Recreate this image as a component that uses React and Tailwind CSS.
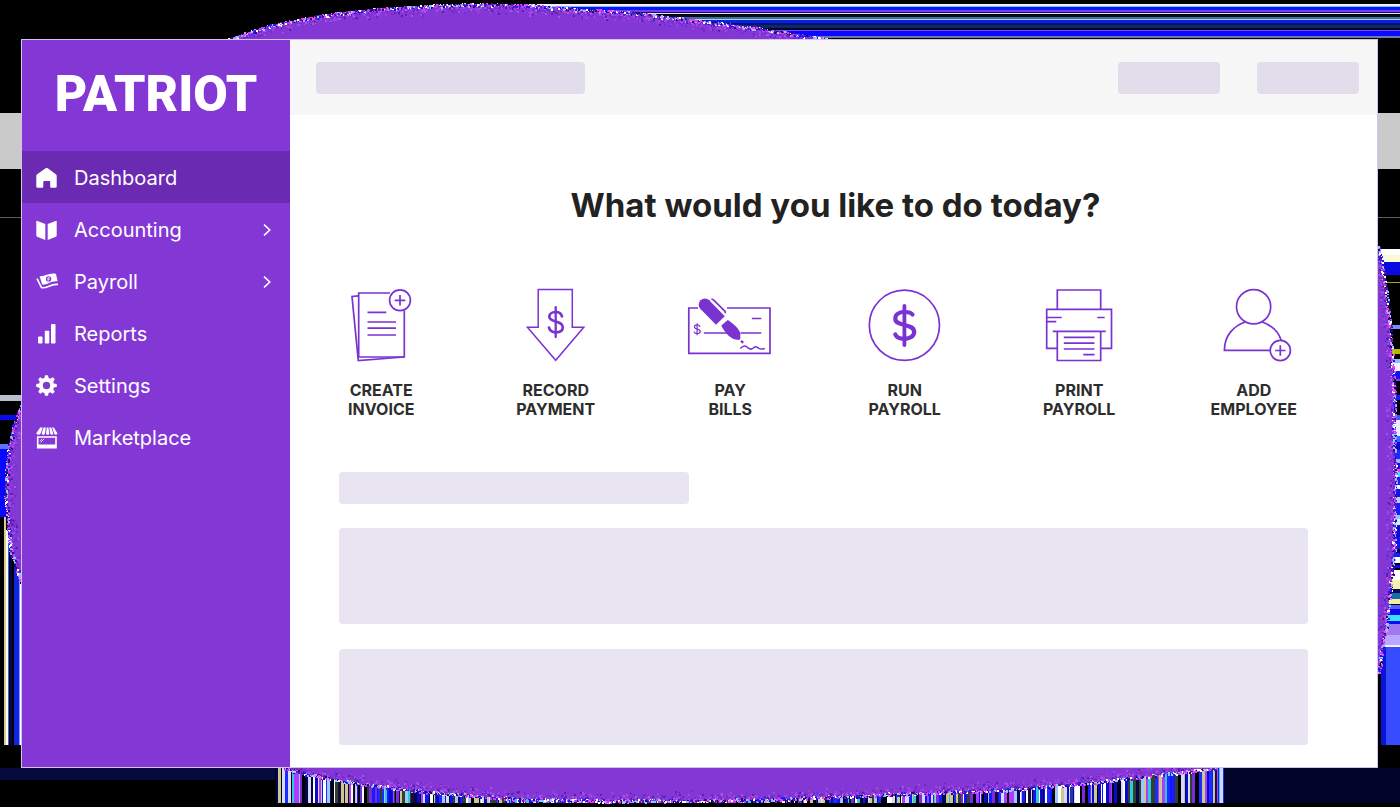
import React from 'react'

// seeded so the speckle looks the same on every render
function makeRandom(seed) {
  let s = seed
  return () => {
    s = (s * 16807) % 2147483647
    return s / 2147483647
  }
}

const TOP_EDGE = [[228, 39], [248, 32], [271, 25], [322, 15], [373, 9], [439, 5], [480, 4], [530, 5], [577, 9], [630, 12], [679, 18], [751, 27], [790, 33], [830, 39]]
const BOTTOM_EDGE = [[284, 768], [310, 775], [362, 784], [429, 792], [515, 799], [613, 801], [760, 800], [870, 795], [1004, 790], [1096, 782], [1157, 775], [1216, 768]]
const LEFT_EDGE = [[21, 405], [13, 425], [9, 445], [6, 470], [5, 500], [8, 525], [10, 550], [15, 565], [21, 584]]
const RIGHT_EDGE = [[1378, 246], [1383, 270], [1388, 310], [1391, 340], [1394, 390], [1394, 430], [1395, 480], [1394, 550], [1390, 590], [1387, 620], [1381, 655], [1378, 675]]

const SPECKLES = ['#ffffff', '#ff3bf0', '#1a1aff', '#7fd4ff', '#5b1fa8', '#c23bff', '#2b0a6b', '#b79bff']
const SOFT_SPECKLES = ['#5b1fa8', '#9c48e8', '#7428c8', '#a040d8', '#6a30e8', '#b050e0']

const TOP_STRIPES = [
  [4, 2, '#f4ecff'], [6, 1, '#6fc4ff'], [7, 3, '#0a14f5'], [10, 2, '#7a3bf0'], [12, 1, '#10106a'], [13, 1, '#e8e4ff'],
  [15, 2, '#061012'], [17, 2, '#3f6f96'], [19, 1, '#a8d8ff'], [20, 3, '#0a22e0'], [23, 2, '#04107a'], [25, 3, '#0b2a60'],
  [28, 2, '#04042a'], [30, 1, '#7a48e8'], [31, 5, '#0a0aff'], [36, 2, '#7076a8'],
]

const RIGHT_STRIPES = [
  [249, 6, '#ffffff'], [255, 7, '#fbf8d8'], [262, 13, '#0a0ae0'], [282, 1, '#a8a820'], [325, 4, '#7a8cff'],
  [349, 5, '#b8b800'], [359, 4, '#9cb4ff'], [363, 8, '#f4f4ff'], [371, 8, '#1414f0'], [379, 2, '#8a3bd0'],
  [395, 5, '#1a1aff'], [415, 5, '#3a5cff'], [420, 16, '#e8ecff'], [436, 6, '#2a6cff'], [442, 8, '#0a0ac8'],
  [450, 9, '#1a2cff'], [459, 4, '#9cb4ff'], [463, 6, '#1414e0'], [469, 3, '#ff3bf0'], [472, 5, '#3be8ff'],
  [477, 8, '#1a1aff'], [485, 4, '#f4f4ff'], [489, 8, '#1414e0'], [497, 6, '#b8ccff'], [503, 12, '#1a1aff'],
  [515, 4, '#7ad4ff'], [519, 6, '#dce4ff'], [525, 12, '#0a0ad0'], [537, 12, '#1414f0'], [549, 4, '#05053a'],
  [553, 4, '#1a1aff'], [557, 6, '#ffffff'], [565, 3, '#0a0ae0'], [570, 10, '#ffffff'], [580, 9, '#f4f0a8'],
  [589, 4, '#0a0a60'], [593, 6, '#1a6ca8'], [599, 5, '#f0f0a0'], [605, 4, '#5a5cff'], [609, 6, '#0a0af0'],
  [615, 6, '#3be0ff'], [621, 3, '#0a0af0'], [624, 11, '#a078f0'], [635, 10, '#b8a8ff'], [645, 2, '#f4ecff'],
]

const STRIPE_COLORS = ['#0a14ff', '#ffffff', '#000000', '#0a0ac8', '#7a2be0', '#9cc8ff', '#000018', '#1a2cff', '#b03bff', '#05054a', '#d8d8ff', '#33412a', '#1a1aff', '#c8c890', '#30c8e0', '#1a0a40']

function speckle(edge, seed, horizontal, inward) {
  const rand = makeRandom(seed)
  const dots = []
  for (let i = 0; i < edge.length - 1; i++) {
    const [x1, y1] = edge[i]
    const [x2, y2] = edge[i + 1]
    const count = Math.ceil(Math.hypot(x2 - x1, y2 - y1) * 3)
    for (let n = 0; n < count; n++) {
      const t = rand()
      const reach = rand() * rand() * 11 - 1
      const depth = reach * inward
      const x = Math.round(x1 + (x2 - x1) * t + (horizontal ? 0 : depth))
      const y = Math.round(y1 + (y2 - y1) * t + (horizontal ? depth : 0))
      // bright near the rim, close to the fill colour further in
      const palette = reach > 2 ? SOFT_SPECKLES : SPECKLES
      const color = palette[Math.floor(rand() * palette.length)]
      dots.push({ x, y, color, size: rand() > 0.4 ? 2 : 1 })
    }
  }
  return dots
}

function barcode() {
  const rand = makeRandom(771)
  const bars = []
  let x = 275
  while (x < 1224) {
    const w = 1 + Math.floor(rand() * 3)
    bars.push({ x, w, color: STRIPE_COLORS[Math.floor(rand() * STRIPE_COLORS.length)] })
    x += w
  }
  return bars
}

const DOTS = [
  ...speckle(TOP_EDGE, 11, true, 1),
  ...speckle(BOTTOM_EDGE, 23, true, -1),
  ...speckle(LEFT_EDGE, 37, false, 1),
  ...speckle(RIGHT_EDGE, 53, false, -1),
]
const BARS = barcode()

const points = (edge) => edge.map((p) => p.join(',')).join(' ')

function Backdrop() {
  return (
    <svg
      className="absolute inset-0 w-full h-full"
      viewBox="0 0 1400 807"
      preserveAspectRatio="none"
      shapeRendering="crispEdges"
      aria-hidden="true"
    >
      <rect width="1400" height="807" fill="#000" />
      <rect y="113" width="1400" height="56" fill="#cacaca" />
      <rect y="217" width="1400" height="1" fill="#5c5c5c" />
      {TOP_STRIPES.map(([y, h, color]) => (
        <rect key={y} x="530" y={y} width="870" height={h} fill={color} />
      ))}
      {RIGHT_STRIPES.map(([y, h, color]) => (
        <rect key={y} x="1379" y={y} width="21" height={h} fill={color} />
      ))}
      <rect x="1381" y="647" width="5" height="98" fill="#0a14d8" />
      <rect x="1386" y="647" width="14" height="98" fill="#384cff" />

      <rect y="395" width="22" height="6" fill="#b8c0cc" />
      <rect y="415" width="22" height="5" fill="#0a0ae8" />
      <rect y="444" width="10" height="5" fill="#5c74f0" />
      <rect y="449" width="8" height="68" fill="#0808ff" />
      <rect x="4" y="517" width="2" height="228" fill="#d8cc88" />
      <rect x="6" y="530" width="2" height="215" fill="#ffffff" />
      <rect x="8" y="530" width="1" height="215" fill="#3a5cff" />
      <rect x="10" y="545" width="2" height="200" fill="#06063a" />
      <rect x="14" y="550" width="5" height="195" fill="#1224e0" />
      <rect x="19" y="570" width="1" height="175" fill="#7a9cff" />
      <rect x="20" y="584" width="2" height="161" fill="#ffffff" />

      <rect y="768" width="275" height="12" fill="#060a3e" />
      <rect x="1224" y="768" width="176" height="35" fill="#02042a" />
      {BARS.map((bar) => (
        <rect key={bar.x} x={bar.x} y="768" width={bar.w} height="35" fill={bar.color} />
      ))}

      <polygon points={points(TOP_EDGE)} fill="#8338d6" />
      <polygon points={points(BOTTOM_EDGE)} fill="#8338d6" />
      <polygon points={points(LEFT_EDGE)} fill="#8338d6" />
      <polygon points={points(RIGHT_EDGE)} fill="#8338d6" />
      {DOTS.map((dot, i) => (
        <rect key={i} x={dot.x} y={dot.y} width={dot.size} height={dot.size} fill={dot.color} />
      ))}
    </svg>
  )
}

function NavIcon({ children }) {
  return (
    <svg className="w-[22px] h-[22px] shrink-0" viewBox="0 0 22 22" fill="currentColor" aria-hidden="true">
      {children}
    </svg>
  )
}

function HomeIcon() {
  return (
    <NavIcon>
      <path d="M9.600 1.300q1.100-.7 2.200 0l8 6q.9.700.9 1.800v10.400q0 1.200-1.200 1.200h-4.300q-1 0-1-1V15q0-1-1-1H8.300q-1 0-1 1v4.700q0 1-1 1H1.500q-1.200 0-1.200-1.200V9.100Q.3 8 1.200 7.300z" />
    </NavIcon>
  )
}

function BookIcon() {
  return (
    <NavIcon>
      <path d="M.3 2.600Q.3 1.500 1.400 1.900L9.300 4.900V21L1.100 17.700Q.3 17.300.3 16.500zM20.700 2.600Q20.700 1.500 19.600 1.900L11.700 4.900V21L19.900 17.700Q20.700 17.300 20.700 16.500z" />
    </NavIcon>
  )
}

function CashIcon() {
  return (
    <NavIcon>
      <path
        fillRule="evenodd"
        d="M3.600 5.300C9 5.800 13 1.500 20 2.900L21.600 10.300C15 9.600 12 13.700 6.300 13.700zM12.600 5.300A2.700 2.700 0 1 0 12.600 10.700A2.700 2.700 0 1 0 12.600 5.300z"
      />
      <path d="M13.700 7q-2-.9-2 .3t1.100.8q1.100.7-.5 1.100l-1-.3" fill="none" stroke="currentColor" strokeWidth="1" />
      <path d="M1.300 8.200L5.500 16.700C12 17.500 14 12.700 21.400 13.400" fill="none" stroke="currentColor" strokeWidth="1.600" strokeLinejoin="round" strokeLinecap="round" />
    </NavIcon>
  )
}

function BarsIcon() {
  return (
    <NavIcon>
      <rect x="2" y="13.500" width="4.500" height="7" rx=".9" />
      <rect x="8.800" y="7.700" width="4.500" height="12.800" rx=".9" />
      <rect x="15" y=".9" width="4.500" height="19.600" rx=".9" />
    </NavIcon>
  )
}

function GearIcon() {
  return (
    <NavIcon>
      <circle cx="10.500" cy="10.500" r="5.700" fill="none" stroke="currentColor" strokeWidth="4" />
      {[0, 45, 90, 135, 180, 225, 270, 315].map((angle) => (
        <path key={angle} d="M8.200 4L8.900 .7q.1-.5.6-.5h2q.5 0 .6.500L12.800 4z" transform={`rotate(${angle} 10.500 10.500)`} />
      ))}
    </NavIcon>
  )
}

function StoreIcon() {
  return (
    <NavIcon>
      <path d="M4.200.4h2.600L4.600 6.400q-.4 1.300-2.200 1.300T.2 6.300zM7.600.4h2.200L9 6.600q-.2 1.200-1.700 1.200T5.600 6.400zM10.700.4h1.700l.9 6.200q0 1.200-1.500 1.200T10.100 6.600zM13.300.4h1.900l2.100 6q0 1.400-1.400 1.400t-1.700-1.200zM16.100.4h1.700l3.600 5.900q0 1.400-1.500 1.400t-1.700-1.300z" />
      <path fillRule="evenodd" d="M.9 9.200h19.900v12.300H.9zM2.500 10.800v6.600h16.700v-6.600z" />
      <path d="M3.900 14.200l2.200-2.200M4.600 15.400l3.600-3.600" stroke="currentColor" strokeWidth=".8" />
    </NavIcon>
  )
}

function ActionIcon({ children }) {
  return (
    <svg
      className="w-[88px] h-[76px]"
      viewBox="0 0 88 76"
      fill="none"
      stroke="#7a33d1"
      strokeWidth="1.700"
      aria-hidden="true"
    >
      {children}
    </svg>
  )
}

function InvoiceIcon() {
  return (
    <ActionIcon>
      <path d="M21.700 8.800L15 9.500L21.300 73.500L67 70" />
      <path d="M53 6H21.700V70H67.300V23.500" />
      <circle cx="63" cy="13.300" r="10.400" />
      <path d="M63 8v10.600M57.700 13.300h10.600" />
      <path d="M30.500 25.400H49.300M30.500 35H59M30.500 41.200H59M30.500 48H59" />
    </ActionIcon>
  )
}

function PaymentIcon() {
  return (
    <ActionIcon>
      <path d="M26.200 2.500H60.300V40.300H71.800L43.700 73.300L15.400 40.300H26.200z" strokeWidth="1.500" />
      <path d="M43.700 20.200V50" strokeWidth="2.300" strokeLinecap="round" />
      <path d="M50 29.400C49 25.500 45.500 25 43.600 25C39.500 25 37.300 27.300 37.300 29.800C37.300 35.800 50.800 33.300 50.800 40.200C50.800 43.800 47.500 45.300 43.900 45.300C40.500 45.300 37.600 43.800 37 40.600" strokeWidth="2.700" strokeLinecap="round" />
    </ActionIcon>
  )
}

function BillsIcon() {
  return (
    <ActionIcon>
      <path d="M12 21H2.800V66.300H84V21H41" />
      <path d="M18.700 17.500L34.400 33.500" strokeWidth="12.400" />
      <circle cx="18.900" cy="17.700" r="6.200" fill="#7a33d1" stroke="none" />
      <path d="M25.400 12.300Q26.500 12 28 13.300L39.300 24.600V26.300" />
      <path d="M35.300 38.600L41.800 32.900C46.500 35.600 54 42.500 54.300 46.400V51.700L53.200 53L48.300 52.300C42.600 50 38 44.600 35.300 38.600z" fill="#7a33d1" stroke="none" />
      <path d="M55 53.700L57.200 55.900" strokeWidth="2.200" />
      <path d="M54.300 61.600C58 57.500 60 58.800 62 60.800S66 62.500 68 60.500S71.500 60.500 73 61.500S76.500 62 78.800 61.600" strokeWidth="1.500" />
      <path d="M17.800 46H43.600M54.500 46H75.300M65.800 31.500H75.300" />
      <path d="M11.100 36.200V48.200M14 39.700C13.200 37.200 8.400 37.200 8.400 40C8.400 42.800 14.200 41.400 14.200 44.400C14.200 47.300 8.700 47.300 8.100 44.600" strokeWidth="1.200" />
    </ActionIcon>
  )
}

function RunPayrollIcon() {
  return (
    <ActionIcon>
      <circle cx="43.400" cy="38.300" r="35.100" />
      <path d="M43.400 19V58" strokeWidth="3.800" strokeLinecap="round" />
      <path d="M51.500 27.500C49.500 24.800 46.500 25 43.200 25C37.700 25 34.300 27.800 34.300 31.700C34.300 40.200 53.200 35.700 53.200 45C53.200 49.300 48.500 51.800 43.600 51.800C39 51.800 35.500 50.400 34.300 47.500" strokeWidth="4.200" strokeLinecap="round" />
    </ActionIcon>
  )
}

function PrinterIcon() {
  return (
    <ActionIcon>
      <path d="M22.300 22.300V3H65.700V22.300" />
      <path d="M22.300 61.300H11.700V22.300H76.500V61.300H65.700" />
      <path d="M17.700 44.300H70.700M22.300 44.300V73.500H65.700V44.300" />
      <path d="M11.700 30.500H26.700M11.700 34.700H21.300M62.300 30.500H69.700" />
      <path d="M28.800 50.300H59.500M28.800 56.200H59.500M28.800 62H59.500M48.300 67.700H59.500" />
    </ActionIcon>
  )
}

function EmployeeIcon() {
  return (
    <ActionIcon>
      <circle cx="43.600" cy="19.800" r="17.100" />
      <path d="M35.300 35C23.500 39 14.400 48.500 14.400 63.300H60" />
      <path d="M52.300 35C61.500 38.500 68.500 44.500 71.200 53.300" />
      <circle cx="70.300" cy="63.500" r="10.100" />
      <path d="M70.300 58.300v10.400M65.100 63.500h10.400" />
    </ActionIcon>
  )
}

const NAV_ITEMS = [
  { label: 'Dashboard', icon: HomeIcon, active: true },
  { label: 'Accounting', icon: BookIcon, expandable: true },
  { label: 'Payroll', icon: CashIcon, expandable: true },
  { label: 'Reports', icon: BarsIcon },
  { label: 'Settings', icon: GearIcon },
  { label: 'Marketplace', icon: StoreIcon },
]

const ACTIONS = [
  { top: 'CREATE', bottom: 'INVOICE', icon: InvoiceIcon },
  { top: 'RECORD', bottom: 'PAYMENT', icon: PaymentIcon },
  { top: 'PAY', bottom: 'BILLS', icon: BillsIcon },
  { top: 'RUN', bottom: 'PAYROLL', icon: RunPayrollIcon },
  { top: 'PRINT', bottom: 'PAYROLL', icon: PrinterIcon },
  { top: 'ADD', bottom: 'EMPLOYEE', icon: EmployeeIcon },
]

function Sidebar() {
  return (
    <aside className="w-[268px] shrink-0 bg-[#8338d6] text-white">
      <div className="h-[111px] pt-1 pb-2 flex items-center justify-center font-['Roboto',sans-serif] font-black text-[50px] leading-none">
        PATRIOT
      </div>
      <nav>
        {NAV_ITEMS.map(({ label, icon: Icon, active, expandable }) => (
          <a
            key={label}
            href="#"
            aria-current={active ? 'page' : undefined}
            className={`flex items-center gap-4 h-[52px] pt-px pl-[14px] pr-[19px] text-xl ${active ? 'bg-[#6b2ab2]' : ''}`}
          >
            <Icon />
            <span className="flex-1">{label}</span>
            {expandable ? (
              <svg className="w-2 h-3" viewBox="0 0 8 12" fill="none" stroke="currentColor" strokeWidth="1.600" aria-hidden="true">
                <path d="M1 .6L6.800 6L1 11.400" />
              </svg>
            ) : null}
          </a>
        ))}
      </nav>
    </aside>
  )
}

export default function App() {
  return (
    <div className="relative min-h-screen flex pl-[21px] pr-[22px] pt-[39px] pb-[39px] font-['Inter',sans-serif]">
      <Backdrop />
      <div className="relative flex flex-1 border border-[#d3c3ea] bg-white">
        <Sidebar />
        <div className="flex-1 min-w-0">
          <header className="flex items-center h-[75px] pl-[26px] pr-[18px] bg-[#f7f7f7]">
            <div className="w-[269px] h-8 rounded bg-[#e1ddeb]" />
            <div className="ml-auto flex gap-[37px]">
              <div className="w-[102px] h-8 rounded bg-[#e1ddeb]" />
              <div className="w-[102px] h-8 rounded bg-[#e1ddeb]" />
            </div>
          </header>

          <main className="pt-[68px] pb-[21px]">
            <h1 className="pl-1 text-center text-[33px] leading-[44px] font-bold text-[#222222]">
              What would you like to do today?
            </h1>

            <section className="grid grid-cols-6 mt-[60px] pl-1 pr-9">
              {ACTIONS.map(({ top, bottom, icon: Icon }) => (
                <button key={`${top} ${bottom}`} type="button" className="flex flex-col items-center">
                  <Icon />
                  <span className="mt-[18px] text-base leading-[19px] font-bold text-[#2d2d2d]">
                    {top}
                    <br />
                    {bottom}
                  </span>
                </button>
              ))}
            </section>

            <section className="flex flex-col pl-[49px] pr-[69px] mt-[53px]">
              <div className="w-[350px] h-8 rounded bg-[#e8e4f2]" />
              <div className="h-24 mt-6 rounded bg-[#e8e4f2]" />
              <div className="h-24 mt-[25px] rounded bg-[#e8e4f2]" />
            </section>
          </main>
        </div>
      </div>
    </div>
  )
}
